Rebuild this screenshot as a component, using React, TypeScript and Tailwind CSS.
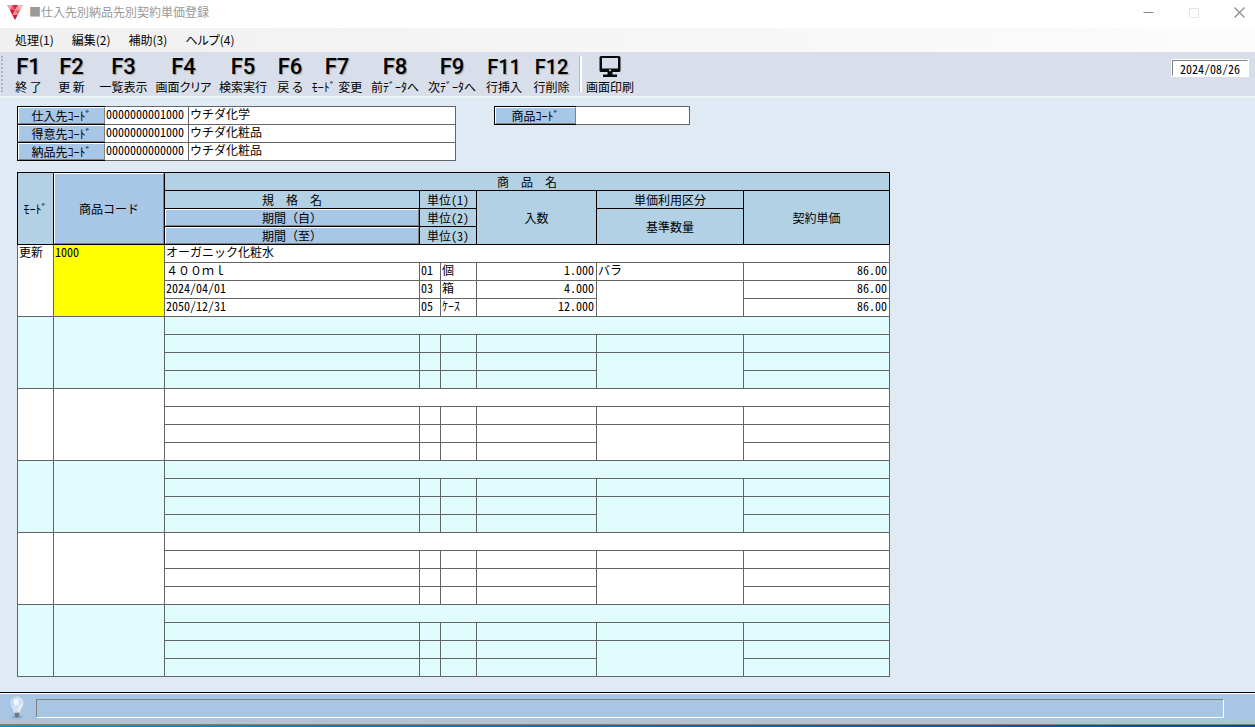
import { Fragment } from "react"

const menuItems = ["処理(1)", "編集(2)", "補助(3)", "ヘルプ(4)"]

const functionKeys = [
  { key: "F1", label: "終 了", width: "w-[41px]" },
  { key: "F2", label: "更 新", width: "w-[45px]" },
  { key: "F3", label: "一覧表示", width: "w-[59px]" },
  { key: "F4", label: "画面クリア", width: "w-[61px]" },
  { key: "F5", label: "検索実行", width: "w-[58px]" },
  { key: "F6", label: "戻 る", width: "w-[36px]" },
  { key: "F7", label: "ﾓｰﾄﾞ 変更", width: "w-[58px]" },
  { key: "F8", label: "前ﾃﾞｰﾀへ", width: "w-[58px]" },
  { key: "F9", label: "次ﾃﾞｰﾀへ", width: "w-[56px]" },
  { key: "F11", label: "行挿入", width: "w-[48px]" },
  { key: "F12", label: "行削除", width: "w-[47px]" },
]

const partners = [
  { id: "supplier", label: "仕入先ｺｰﾄﾞ", code: "0000000001000", name: "ウチダ化学" },
  { id: "customer", label: "得意先ｺｰﾄﾞ", code: "0000000001000", name: "ウチダ化粧品" },
  { id: "delivery", label: "納品先ｺｰﾄﾞ", code: "0000000000000", name: "ウチダ化粧品" },
]

type Unit = { no: string; name: string; qty: string; price: string }

type Item = {
  mode: string
  code: string
  name: string
  spec: string
  from: string
  to: string
  priceType: string
  units: Unit[]
}

const noUnit: Unit = { no: "", name: "", qty: "", price: "" }

const emptyItem: Item = {
  mode: "",
  code: "",
  name: "",
  spec: "",
  from: "",
  to: "",
  priceType: "",
  units: [noUnit, noUnit, noUnit],
}

const items: Item[] = [
  {
    mode: "更新",
    code: "1000",
    name: "オーガニック化粧水",
    spec: "４００ｍｌ",
    from: "2024/04/01",
    to: "2050/12/31",
    priceType: "バラ",
    units: [
      { no: "01", name: "個", qty: "1.000", price: "86.00" },
      { no: "03", name: "箱", qty: "4.000", price: "86.00" },
      { no: "05", name: "ｹｰｽ", qty: "12.000", price: "86.00" },
    ],
  },
  emptyItem,
  emptyItem,
  emptyItem,
  emptyItem,
  emptyItem,
]

const bevel =
  "border border-t-white border-l-white border-r-[#808080] border-b-[#808080] bg-[#a8c6e6] text-center leading-[15px] whitespace-nowrap"

const head = "border border-black bg-[#b2d1e5] p-0 font-normal leading-[15px]"
const cell = "border border-[#646464] p-0 align-top leading-[14px] whitespace-nowrap"
const textCell = `${cell} pl-px`
const numberCell = `${cell} pr-0.5 text-right`

// keeps full-width forms full width where the grid otherwise uses half-width digits
const fullWidth = "[font-feature-settings:normal]"

function Logo() {
  return (
    <svg width="16" height="15" viewBox="0 0 16 15" aria-hidden="true">
      <path d="M0 0h16L8 15z" fill="#f2959c" />
      <path d="M0 0h5.5L3 5z" fill="#f3a7aa" />
      <path d="M5.5 0H11L8 5z" fill="#e01c40" />
      <path d="M11 0h5L13 5z" fill="#f6b9bb" />
      <path d="M3 5L5.500 0 8 5z" fill="#e85a6c" />
      <path d="M8 5l3-5L13 5z" fill="#f29a9c" />
      <path d="M3 5h5l-2.500 5z" fill="#dd1038" />
      <path d="M8 5h5l-2.500 5z" fill="#ea6876" />
      <path d="M5.500 10L8 5l2.500 5z" fill="#f08a92" />
      <path d="M5.500 10h5L8 15z" fill="#dc1238" />
    </svg>
  )
}

function Bulb() {
  return (
    <svg width="16" height="24" viewBox="0 0 16 24" aria-hidden="true">
      <ellipse cx="8" cy="21" rx="6" ry="1.500" fill="#7f9dbb" opacity="0.6" />
      <path
        d="M8 1C4.400 1 2 3.600 2 6.900c0 3.400 2.900 5.300 3.500 9.600h5C11.100 12.200 14 10.300 14 6.900 14 3.600 11.600 1 8 1z"
        fill="#cfe2f5"
        stroke="#e6eef6"
      />
      <path d="M3.500 9.500C2.400 5 4.500 2 8 2" stroke="#a5c0da" fill="none" />
      <ellipse cx="7" cy="6" rx="2.600" ry="3.400" fill="#eef6fe" />
      <path d="M9.500 15.500c.2-3 2-5 2.800-7" stroke="#ffffff" fill="none" />
      <path d="M5.500 16.500h5v4L9 22H7l-1.500-1.500z" fill="#8d98a3" />
      <path d="M6 18h4M6 20h4" stroke="#505a64" />
    </svg>
  )
}

function Monitor() {
  return (
    <svg width="22" height="22" viewBox="0 0 22 22" aria-hidden="true">
      <path
        fillRule="evenodd"
        d="M2 0h18a1.500 1.500 0 0 1 1.500 1.500v13A1.500 1.500 0 0 1 20 16h-6.500v2.500H18V21H4v-2.500h4.500V16H2A1.500 1.500 0 0 1 .5 14.500v-13A1.500 1.500 0 0 1 2 0zM3 2v10.500h16V2z"
        fill="#0a0a0a"
      />
      <circle cx="11" cy="14.200" r="1" fill="#d8dfea" />
    </svg>
  )
}

function TitleBar() {
  return (
    <header className="flex h-7 items-start justify-between bg-white">
      <div className="flex items-center gap-1.5 pt-1 pl-[7px]">
        <Logo />
        <h1 className="text-[12px] leading-[16px] text-[#999999]">■仕入先別納品先別契約単価登録</h1>
      </div>
      <div className="flex">
        <button aria-label="最小化" className="flex h-6 w-[45px] items-center justify-center">
          <svg width="11" height="11" viewBox="0 0 11 11">
            <path d="M0.500 5.500h10" stroke="#8a8a8a" />
          </svg>
        </button>
        <button aria-label="最大化" className="flex h-6 w-[45px] items-center justify-center">
          <svg width="11" height="11" viewBox="0 0 11 11">
            <path d="M1.500 1.500h9v9h-9z" fill="none" stroke="#e4e4e4" />
          </svg>
        </button>
        <button aria-label="閉じる" className="flex h-6 w-[39px] items-center justify-center pl-2">
          <svg width="11" height="11" viewBox="0 0 11 11">
            <path d="M0.500 0.500l10 10M10.500 0.500l-10 10" stroke="#8a8a8a" strokeWidth="1.200" />
          </svg>
        </button>
      </div>
    </header>
  )
}

function Toolbar() {
  return (
    <div className="flex h-[46px] items-start justify-between border-b-2 border-[#eef3f8] bg-[#d8dfea]">
      <div className="flex">
        <div className="mt-1 ml-px h-9 w-[7px] border-l-2 border-dotted border-[#b0b5bd]" />
        {functionKeys.map((f) => (
          <button key={f.key} className={`flex flex-col items-center pt-[3px] ${f.width}`}>
            <span
              className={`font-['Roboto',sans-serif] leading-6 font-medium text-black [text-shadow:1px_1px_1px_#a0a0a0] ${
                f.key.length > 2 ? "text-[20px]" : "text-[22px]"
              }`}
            >
              {f.key}
            </span>
            <span className="text-[12px] leading-[15px] whitespace-nowrap [font-feature-settings:'palt']">
              {f.label}
            </span>
          </button>
        ))}
        <div className="mt-1 ml-1 h-9 w-[3px] border-l border-[#b4bac4] bg-white" />
        <button className="flex w-14 flex-col items-center pt-[3px]">
          <span className="flex h-6 items-center">
            <Monitor />
          </span>
          <span className="text-[12px] leading-[15px] whitespace-nowrap">画面印刷</span>
        </button>
      </div>
      <input
        readOnly
        aria-label="日付"
        defaultValue="2024/08/26"
        className="mt-2 mr-[7px] h-4 w-[76px] border border-white border-t-[#808080] border-l-[#808080] bg-white text-center leading-[14px] outline outline-white [font-feature-settings:'hwid']"
      />
    </div>
  )
}

function SearchForm() {
  const field =
    "h-[19px] w-full border border-l-0 border-[#646464] bg-white pb-1 pl-px leading-[13px] outline-none"

  return (
    <form className="flex items-start gap-[38px]">
      <div className="grid grid-cols-[88px_84px_267px]">
        {partners.map((p, i) => (
          <Fragment key={p.id}>
            <label
              htmlFor={p.id}
              className={`h-[19px] border border-r-0 border-black ${i > 0 ? "-mt-px" : ""}`}
            >
              <span className={`block h-full ${bevel}`}>{p.label}</span>
            </label>
            <input
              id={p.id}
              defaultValue={p.code}
              className={`${field} ${i > 0 ? "-mt-px" : ""}`}
            />
            <input
              readOnly
              aria-label={`${p.label} 名称`}
              defaultValue={p.name}
              className={`${field} ${i > 0 ? "-mt-px" : ""}`}
            />
          </Fragment>
        ))}
      </div>
      <div className="grid grid-cols-[82px_114px]">
        <label htmlFor="product" className="h-[19px] border border-r-0 border-black">
          <span className={`block h-full ${bevel}`}>商品ｺｰﾄﾞ</span>
        </label>
        <input id="product" className={field} />
      </div>
    </form>
  )
}

function ItemRows({ item, index }: { item: Item; index: number }) {
  const [first, second, third] = item.units
  return (
    <tbody className={index % 2 === 0 ? "bg-white" : "bg-[#e0fcfc]"}>
      <tr className="h-[18px]">
        <td rowSpan={4} className={textCell}>
          {item.mode}
        </td>
        <td rowSpan={4} className={`${textCell} ${item.code ? "bg-[#ffff00]" : ""}`}>
          {item.code}
        </td>
        <td colSpan={6} className={textCell}>
          {item.name}
        </td>
      </tr>
      <tr className="h-[18px]">
        <td className={`${textCell} ${fullWidth}`}>{item.spec}</td>
        <td className={textCell}>{first.no}</td>
        <td className={textCell}>{first.name}</td>
        <td className={numberCell}>{first.qty}</td>
        <td className={textCell}>{item.priceType}</td>
        <td className={numberCell}>{first.price}</td>
      </tr>
      <tr className="h-[18px]">
        <td className={textCell}>{item.from}</td>
        <td className={textCell}>{second.no}</td>
        <td className={textCell}>{second.name}</td>
        <td className={numberCell}>{second.qty}</td>
        <td rowSpan={2} className={cell} />
        <td className={numberCell}>{second.price}</td>
      </tr>
      <tr className="h-[18px]">
        <td className={textCell}>{item.to}</td>
        <td className={textCell}>{third.no}</td>
        <td className={textCell}>{third.name}</td>
        <td className={numberCell}>{third.qty}</td>
        <td className={numberCell}>{third.price}</td>
      </tr>
    </tbody>
  )
}

function PriceTable() {
  return (
    <table className="mt-[11px] w-[873px] table-fixed border-collapse">
      <colgroup>
        <col className="w-[36px]" />
        <col className="w-[111px]" />
        <col className="w-[255px]" />
        <col className="w-[21px]" />
        <col className="w-[36px]" />
        <col className="w-[120px]" />
        <col className="w-[147px]" />
        <col className="w-[146px]" />
      </colgroup>
      <thead>
        <tr className="h-[18px]">
          <th rowSpan={4} className={head}>
            ﾓｰﾄﾞ
          </th>
          <th rowSpan={4} className={head}>
            <button className={`block h-[71px] w-full ${bevel}`}>商品コード</button>
          </th>
          <th colSpan={6} className={`${head} ${fullWidth}`}>
            商　品　名
          </th>
        </tr>
        <tr className="h-[18px]">
          <th className={`${head} ${fullWidth}`}>規　格　名</th>
          <th colSpan={2} className={head}>
            単位(1)
          </th>
          <th rowSpan={3} className={head}>
            入数
          </th>
          <th className={head}>単価利用区分</th>
          <th rowSpan={3} className={head}>
            契約単価
          </th>
        </tr>
        <tr className="h-[18px]">
          <th className={head}>
            <button className={`block h-[17px] w-full ${bevel} ${fullWidth}`}>期間（自）</button>
          </th>
          <th colSpan={2} className={head}>
            単位(2)
          </th>
          <th rowSpan={2} className={head}>
            基準数量
          </th>
        </tr>
        <tr className="h-[18px]">
          <th className={head}>
            <button className={`block h-[17px] w-full ${bevel} ${fullWidth}`}>期間（至）</button>
          </th>
          <th colSpan={2} className={head}>
            単位(3)
          </th>
        </tr>
      </thead>
      {items.map((item, i) => (
        <ItemRows key={i} item={item} index={i} />
      ))}
    </table>
  )
}

export default function App() {
  return (
    <div className="flex min-h-screen flex-col bg-[#e0eaf4] font-['Noto_Sans_CJK_JP',sans-serif] text-[12px] text-black">
      <TitleBar />
      <nav className="flex h-6 items-center gap-[18px] bg-linear-to-r from-[#f0f0f0] to-[#fcfcfc] pl-[15px]">
        {menuItems.map((m) => (
          <button key={m} className="leading-[16px] [font-feature-settings:'palt']">
            {m}
          </button>
        ))}
      </nav>
      <Toolbar />
      <main className="flex-1 px-[17px] pt-2 pb-[15px] [font-feature-settings:'hwid']">
        <SearchForm />
        <PriceTable />
      </main>
      <footer>
        <div className="flex h-[33px] items-start border-t border-b border-t-black border-b-[#808080] bg-[#a8c6e4] pr-[31px] pl-[9px] shadow-[inset_0_1px_0_#ffffff]">
          <div className="pt-[3px]">
            <Bulb />
          </div>
          <div
            role="status"
            className="mt-1.5 ml-[11px] h-[19px] flex-1 border border-t-[#808080] border-r-white border-b-white border-l-[#808080]"
          />
        </div>
        <div className="h-0.5 bg-linear-to-r from-[#0c98cc] to-[#0848a0]" />
      </footer>
    </div>
  )
}
